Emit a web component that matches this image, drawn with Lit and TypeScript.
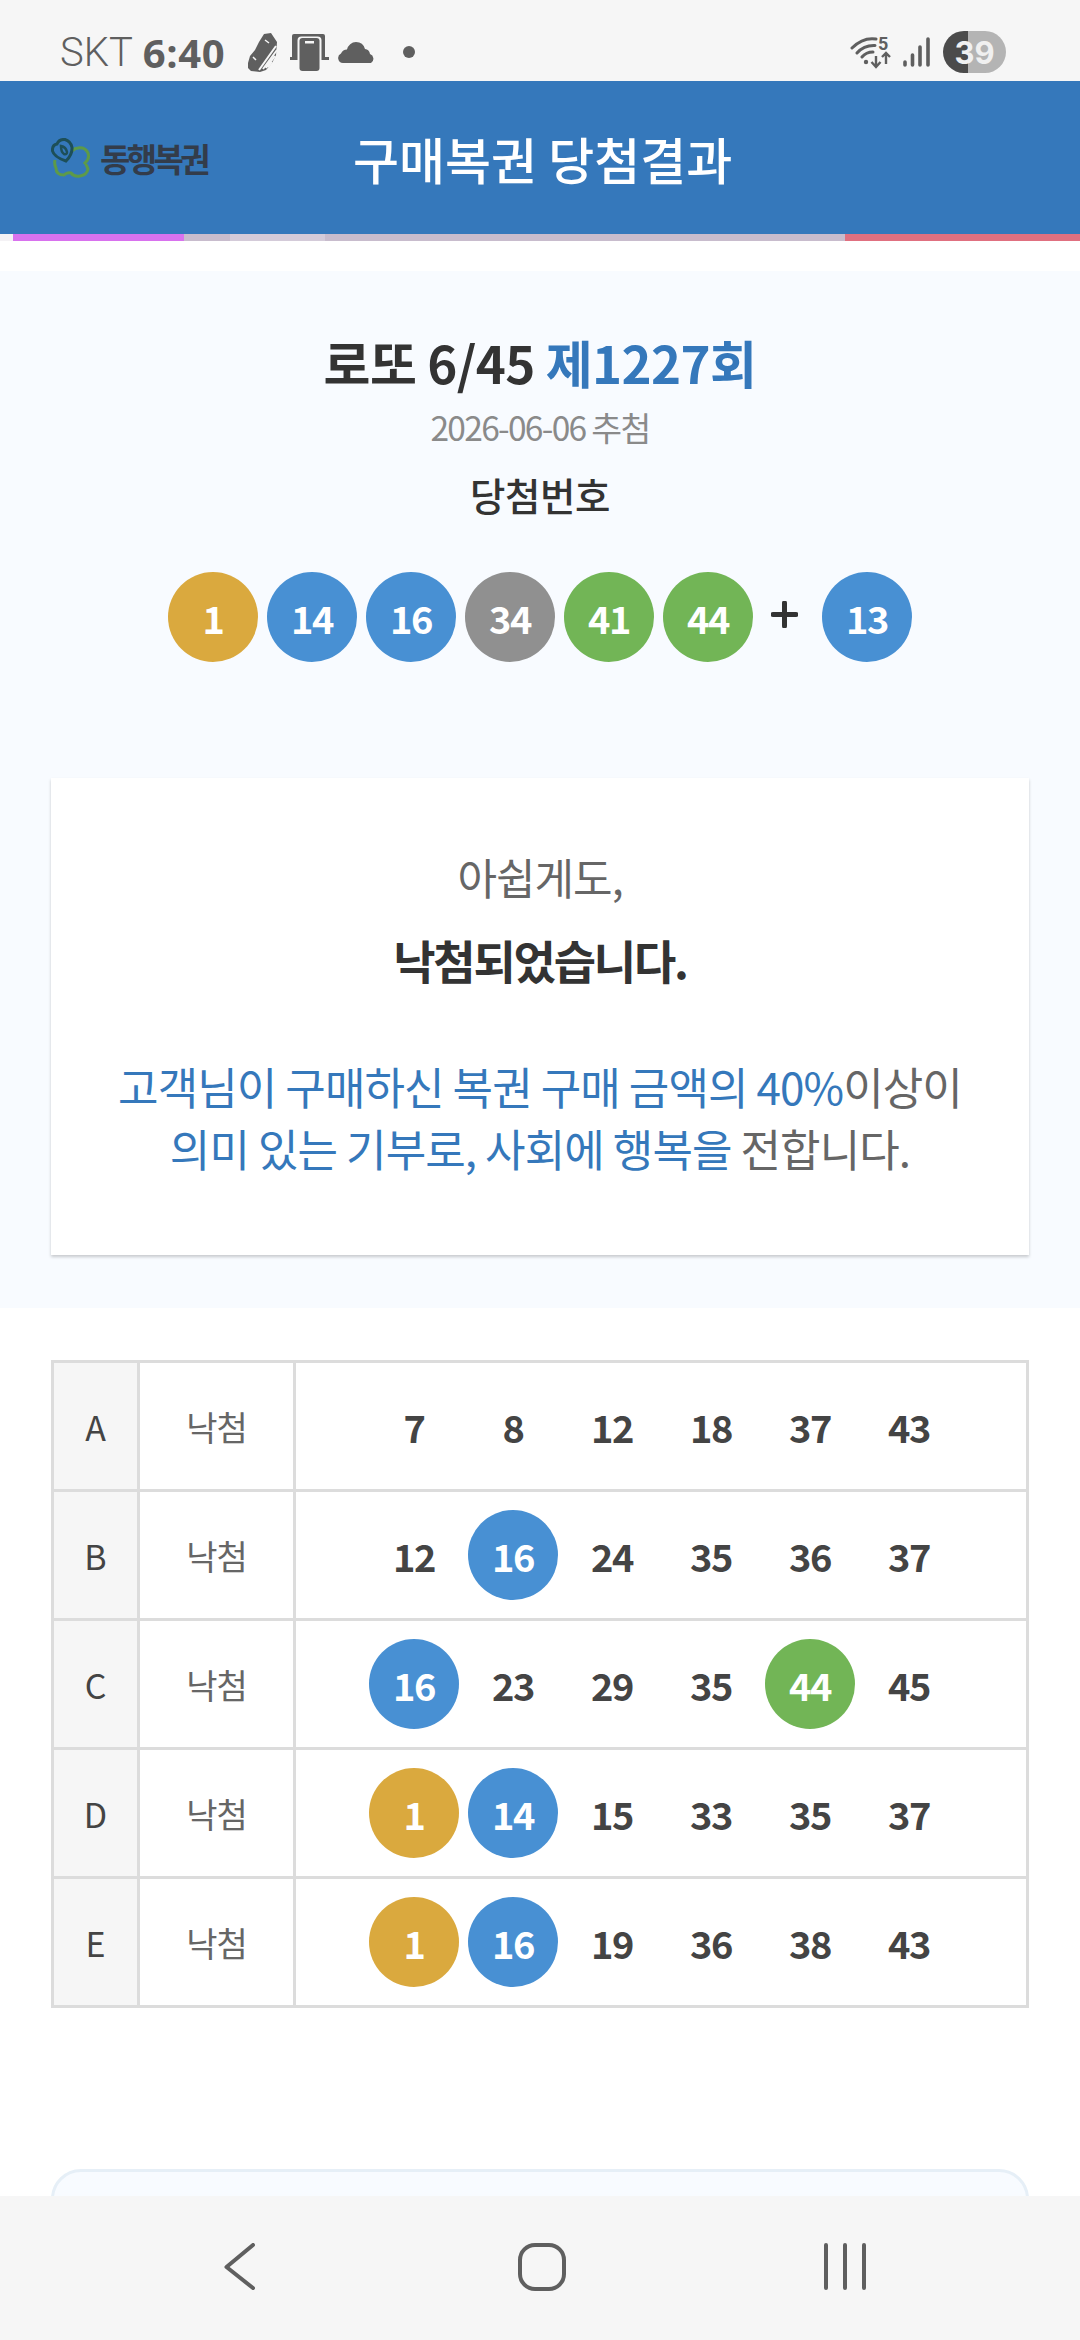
import { LitElement, html, css } from "lit";
import { customElement } from "lit/decorators.js";

type Row = { k: string; n: number[]; hit: number[] };
const ROWS: Row[] = [
  { k: "A", n: [7, 8, 12, 18, 37, 43], hit: [] },
  { k: "B", n: [12, 16, 24, 35, 36, 37], hit: [16] },
  { k: "C", n: [16, 23, 29, 35, 44, 45], hit: [16, 44] },
  { k: "D", n: [1, 14, 15, 33, 35, 37], hit: [1, 14] },
  { k: "E", n: [1, 16, 19, 36, 38, 43], hit: [1, 16] },
];
const tone = (n: number) => (n <= 10 ? "y" : n <= 20 ? "b" : n <= 30 ? "r" : n <= 40 ? "g" : "v");

@customElement("app-root")
export class AppRoot extends LitElement {
  static styles = css`
    :host { display: block; width: 1080px; height: 2340px; font-family: "Noto Sans CJK KR", "Noto Sans", sans-serif; color: #333; }
    * { box-sizing: border-box; }
    .page { height: 2340px; display: flex; flex-direction: column; overflow: hidden; background: #fff; }
    .status { height: 81px; flex: none; background: #f6f6f6; display: flex; align-items: center; padding: 23px 74px 0 60px; color: #5f5f5f; font-family: Roboto, sans-serif; }
    .skt { font-size: 40px; font-weight: 300; margin-right: 10px; }
    .time { font-size: 40px; font-weight: 700; letter-spacing: 0.6px; width: 104px; font-family: "Open Sans", sans-serif; }
    .status svg { display: block; flex: none; }
    .shoe { margin-right: 11px; }
    .phone { margin-right: 9px; }
    .cloud { margin-right: 29px; }
    .wifi { margin-right: 9px; }
    .spacer { flex: 1; }
    .battery { width: 63px; height: 42px; border-radius: 21px; overflow: hidden; background: linear-gradient(90deg, #4b4b4b 0 25px, #b4b4b4 25px); color: #f0f0f0; font-size: 31px; font-weight: 700; display: flex; align-items: center; justify-content: center; font-family: Inter, sans-serif; margin-left: 12px; }
    .header { height: 153px; flex: none; background: #3578bb; display: flex; align-items: center; padding: 0 0 0 51px; }
    .logo { display: flex; align-items: center; gap: 9px; width: 302px; color: #333c4a; font-size: 33px; font-weight: 700; letter-spacing: -3.600px; }
    .head-title { color: #fff; font-size: 50px; font-weight: 500; white-space: nowrap; }
    .strip { height: 7px; flex: none; display: flex; background: #c8bccd; }
    .s0 { width: 13px; background: #f4f2f5; }
    .s1 { width: 171px; background: #d872ee; }
    .s2 { width: 46px; }
    .s3 { width: 95px; background: #d4cbd9; }
    .s4 { flex: 1; }
    .s5 { width: 235px; background: #e07080; }
    .main { flex: 1; min-height: 0; overflow: hidden; }
    .summary { margin-top: 30px; height: 1037px; background: #f8fbff; padding: 0 51px; display: flex; flex-direction: column; align-items: center; }
    h1 { margin: 55px 0 0; font-size: 51px; line-height: 72px; font-weight: 700; letter-spacing: -0.6px; white-space: nowrap; }
    h1 span { color: #3578bb; }
    .date { margin-top: 6px; font-size: 33.5px; line-height: 46px; color: #8a8a8a; letter-spacing: -1.700px; font-weight: 400; }
    .label { margin-top: 16px; font-size: 38.5px; line-height: 56px; font-weight: 500; letter-spacing: -0.4px; }
    .balls { margin-top: 50px; display: flex; gap: 9px; align-items: center; width: 744px; }
    .ball { width: 90px; height: 90px; border-radius: 50%; flex: none; display: flex; align-items: center; justify-content: center; color: #fff; font-size: 38px; font-weight: 700; letter-spacing: -1.500px; }
    .y { background: #daa93e; } .b { background: #4890d3; } .r { background: #e06a6a; } .g { background: #909090; } .v { background: #72b556; }
    .plus { width: 27px; margin: -5px 15px 0 9px; flex: none; }
    .plus svg { display: block; }
    .card { margin-top: 116px; width: 978px; height: 477px; background: #fff; box-shadow: 0 2px 3px rgba(0,0,0,.2); display: flex; flex-direction: column; align-items: center; padding-top: 68px; }
    .sorry { font-size: 43px; line-height: 60px; color: #666; letter-spacing: -1px; font-weight: 400; }
    .lost { margin-top: 21px; font-size: 46px; line-height: 64px; font-weight: 700; letter-spacing: -2.200px; }
    .msg { margin-top: 64px; font-size: 44px; line-height: 62px; color: #666; text-align: center; letter-spacing: -0.9px; font-weight: 400; white-space: nowrap; }
    .msg span { color: #3578bb; }
    .table { margin: 52px 0 0 51px; width: 978px; border: solid #dcdcdc; border-width: 3px 3px 0 3px; display: grid; grid-template-columns: 83px 156px 1fr; }
    .cell { height: 129px; border-bottom: 3px solid #dcdcdc; display: flex; align-items: center; justify-content: center; }
    .state, .nums { border-left: 3px solid #dcdcdc; }
    .key { background: #f6f6f6; font-size: 34px; color: #444; font-weight: 400; }
    .state { font-size: 34px; color: #666; font-weight: 400; letter-spacing: -1px; }
    .nums { gap: 9px; justify-content: flex-start; padding-left: 73px; }
    .num { width: 90px; height: 90px; flex: none; display: flex; align-items: center; justify-content: center; font-size: 38px; font-weight: 700; color: #444; letter-spacing: -1.500px; }
    .hit { color: #fff; border-radius: 50%; }
    .notice { margin: 161px 51px 0; height: 120px; border: 3px solid #e6eff7; background: #f8fbff; border-radius: 30px; }
    .nav { height: 144px; flex: none; background: #f6f6f6; display: flex; align-items: flex-start; padding: 47px 0 0 224px; }
    .nav svg { display: block; flex: none; }
    .home { margin-left: 261px; }
    .recents { margin-left: 256px; }
  `;

  private shoe() {
    return html`<svg class="shoe" width="32" height="40" viewBox="0 0 32 40">
      <path d="M17 2l7-1 6 9-1 13-4 8-6 7-6 2-9-1-3-3v-5l2-7 5-6 4-8z" fill="#5f5f5f"/>
      <path d="M29 14L12 38M30 18l-14 19M28 24L19 36M25 30l-4 5" stroke="#f6f6f6" stroke-width="2" fill="none"/>
      <path d="M6 25l3 3M18 8l4 3" stroke="#f6f6f6" stroke-width="1.500" fill="none"/></svg>`;
  }
  private phone() {
    return html`<svg class="phone" width="39" height="38" viewBox="0 0 39 38">
      <path d="M2 24V3q0-2 2-2h29q2 0 2 2v21z" fill="#5f5f5f"/>
      <path d="M0 25.500h39" stroke="#5f5f5f" stroke-width="3"/>
      <rect x="7.500" y="3.500" width="24" height="36" rx="4" fill="#f6f6f6"/>
      <rect x="9.500" y="5" width="20" height="33" rx="3" fill="#5f5f5f"/>
      <rect x="15" y="8" width="9" height="2.500" fill="#f6f6f6"/></svg>`;
  }
  private cloud() {
    return html`<svg class="cloud" width="36" height="21" viewBox="0 0 36 21"><path d="M5 21a5 5 0 0 1-2-9.500 7 7 0 0 1 6-4A9.500 9.500 0 0 1 18 0a9.500 9.500 0 0 1 9 7 6 6 0 0 1 5 5 5 5 0 0 1 1 9z" fill="#5f5f5f"/></svg>`;
  }
  private wifi() {
    return html`<svg class="wifi" width="44" height="44" viewBox="0 -6 44 44">
      <path d="M2 12Q13 1 26 3M7 17Q14 9 25 9.500M12 21Q16 16 23 16" stroke="#5f5f5f" stroke-width="3" fill="none" stroke-linecap="round"/>
      <circle cx="16" cy="26" r="2.200" fill="#5f5f5f"/>
      <text x="28" y="14" font-size="18" font-weight="700" fill="#5f5f5f" font-family="Roboto, sans-serif">5</text>
      <path d="M26 20v11M21.500 26l4.500 5 4.500-5M36 28V17M32 21l4-4 4 4" stroke="#5f5f5f" stroke-width="2.400" fill="none"/></svg>`;
  }
  private signal() {
    return html`<svg width="28" height="30" viewBox="0 0 28 30"><path d="M2 25v3M9.500 18v10M17 10v18M25 2v26" stroke="#5f5f5f" stroke-width="3.600" stroke-linecap="round"/></svg>`;
  }
  private logo() {
    return html`<svg width="40" height="40" viewBox="0 0 40 40" fill="none">
      <path d="M4 22q-1 4 1 8 0 7 8 7 3-3 7-2 3 4 9 3 7-1 8-7-2-5-3-6 5-4 3-10-3-6-10-5-3 0-6 3" stroke="#5d9a49" stroke-width="3"/>
      <path d="M15 23Q3 19 1.500 13 1 7 6 6 8 1 14 1.500q6 2 7 8 .5 7-6 13.500z" stroke="#1d4f58" stroke-width="3"/>
      <path d="M10 8q5 1 6 6 0 3-3 2-3-2-3-8z" stroke="#1d4f58" stroke-width="2.500"/></svg>`;
  }
  private renderNumber(n: number, hit: boolean) {
    return html`<div class="num ${hit ? "hit " + tone(n) : ""}">${n}</div>`;
  }

  render() {
    const win = [1, 14, 16, 34, 41, 44];
    return html`<div class="page">
      <div class="status">
        <span class="skt">SKT</span><span class="time">6:40</span>
        ${this.shoe()}${this.phone()}${this.cloud()}
        <svg width="12" height="12" viewBox="0 0 12 12"><circle cx="6" cy="6" r="6" fill="#5f5f5f"/></svg>
        <div class="spacer"></div>
        ${this.wifi()}${this.signal()}
        <div class="battery">39</div>
      </div>
      <div class="header">
        <div class="logo">${this.logo()}<span>동행복권</span></div>
        <div class="head-title">구매복권 당첨결과</div>
      </div>
      <div class="strip"><i class="s0"></i><i class="s1"></i><i class="s2"></i><i class="s3"></i><i class="s4"></i><i class="s5"></i></div>
      <div class="main">
        <section class="summary">
          <h1>로또 6/45 <span>제1227회</span></h1>
          <div class="date">2026-06-06 추첨</div>
          <div class="label">당첨번호</div>
          <div class="balls">
            ${win.map((n) => html`<div class="ball ${tone(n)}">${n}</div>`)}
            <div class="plus"><svg width="27" height="27" viewBox="0 0 27 27"><path d="M13.500 2v23M2 13.500h23" stroke="#333" stroke-width="5" stroke-linecap="round"/></svg></div>
            <div class="ball b">13</div>
          </div>
          <div class="card">
            <div class="sorry">아쉽게도,</div>
            <div class="lost">낙첨되었습니다.</div>
            <div class="msg"><span>고객님이 구매하신 복권 구매 금액의 40%</span>이상이<br /><span>의미 있는 기부로, 사회에 행복을</span> 전합니다.</div>
          </div>
        </section>
        <div class="table">
          ${ROWS.map((r) => html`
            <div class="cell key">${r.k}</div>
            <div class="cell state">낙첨</div>
            <div class="cell nums">${r.n.map((n) => this.renderNumber(n, r.hit.includes(n)))}</div>
          `)}
        </div>
        <div class="notice"></div>
      </div>
      <div class="nav">
        <svg width="32" height="50" viewBox="0 0 32 50"><path d="M29 2L2.500 24 29 45" stroke="#5f5f5f" stroke-width="4" fill="none" stroke-linecap="round" stroke-linejoin="round"/></svg>
        <svg class="home" width="50" height="50" viewBox="0 0 50 50"><rect x="3" y="2" width="44" height="44" rx="15" stroke="#5f5f5f" stroke-width="4" fill="none"/></svg>
        <svg class="recents" width="44" height="50" viewBox="0 0 44 50"><path d="M3 2v43M22 2v43M41 2v43" stroke="#5f5f5f" stroke-width="4" stroke-linecap="round"/></svg>
      </div>
    </div>`;
  }
}
